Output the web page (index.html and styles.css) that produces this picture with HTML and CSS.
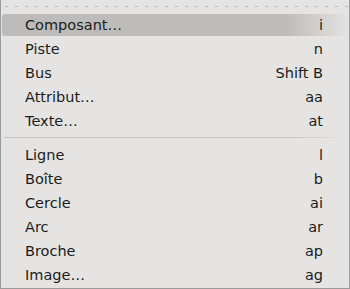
FILE: index.html
```html
<!DOCTYPE html>
<html lang="fr">
<head>
<meta charset="utf-8">
<title>Menu</title>
<link rel="stylesheet" href="styles.css">
</head>
<body>
<div class="menu">
  <div class="tearoff"></div>
  <div class="item active"><span class="label">Composant…</span><span class="accel">i</span></div>
  <div class="item"><span class="label">Piste</span><span class="accel">n</span></div>
  <div class="item"><span class="label">Bus</span><span class="accel">Shift B</span></div>
  <div class="item"><span class="label">Attribut…</span><span class="accel">aa</span></div>
  <div class="item"><span class="label">Texte…</span><span class="accel">at</span></div>
  <div class="sep"></div>
  <div class="item"><span class="label">Ligne</span><span class="accel">l</span></div>
  <div class="item"><span class="label">Boîte</span><span class="accel">b</span></div>
  <div class="item"><span class="label">Cercle</span><span class="accel">ai</span></div>
  <div class="item"><span class="label">Arc</span><span class="accel">ar</span></div>
  <div class="item"><span class="label">Broche</span><span class="accel">ap</span></div>
  <div class="item"><span class="label">Image…</span><span class="accel">ag</span></div>
</div>
</body>
</html>
```
FILE: styles.css
```css
html, body {
  margin: 0;
  padding: 0;
  background: #e5e4e2;
}
.menu {
  box-sizing: border-box;
  width: 350px;
  height: 289px;
  background: #e5e4e2;
  border-left: 1px solid #9b9b9b;
  border-right: 1px solid #9b9b9b;
  border-bottom: 1px solid #9b9b9b;
  font-family: "DejaVu Sans", sans-serif;
  font-size: 14.5px;
  color: #1c1c1c;
  display: flex;
  flex-direction: column;
}
.tearoff {
  height: 13px;
  box-sizing: border-box;
  padding-top: 6px;
  margin: 0 1px 0 4px;
}
.tearoff::before {
  content: "";
  display: block;
  height: 1px;
  background: repeating-linear-gradient(to right, #bdbdbd 0 3px, transparent 3px 10px);
}
.item {
  height: 22px;
  margin: 1px 2px 1px 1px;
  padding: 0 24px 0 23px;
  display: flex;
  align-items: center;
  justify-content: space-between;
  border-radius: 3px;
  line-height: 22px;
}
.item.active {
  background: linear-gradient(to right, #bdbcba 0, #bdbcba 82%, #e3e2e0 100%);
}
.sep {
  height: 10px;
  box-sizing: border-box;
  padding-top: 4px;
  margin: 0 4px 0 3px;
}
.sep::before {
  content: "";
  display: block;
  height: 1px;
  background: linear-gradient(to right, #c6c5c3 0, #c6c5c3 85%, #e5e4e2 100%);
}
```
